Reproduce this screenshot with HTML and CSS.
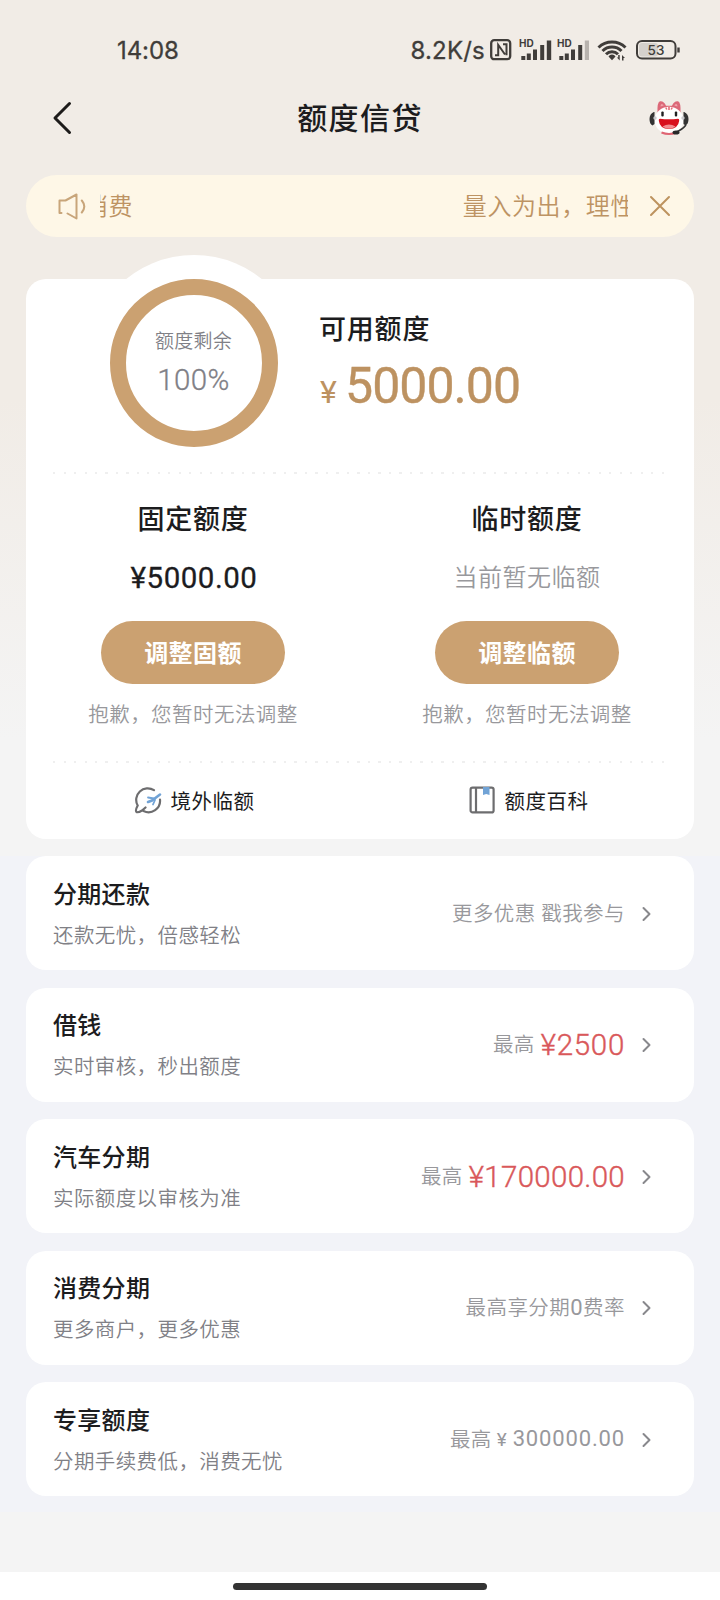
FILE: index.html
```html
<!DOCTYPE html>
<html lang="zh-CN">
<head>
<meta charset="utf-8">
<title>额度信贷</title>
<link rel="stylesheet" href="styles.css">
</head>
<body>
<div class="screen">
  <div class="status">
    <span class="time">14:08</span>
    <div class="status-right">
      <span class="speed">8.2K/s</span>
      <svg class="status-icons" width="192" height="30" viewBox="488 35 192 30" fill="none" stroke="#403d3a">
        <rect x="491.200" y="40.200" width="19" height="19" rx="3" stroke-width="2.300"/>
        <path d="M495 55.300h3.200V44.800L505 54.500M503 44.300h3.500V55.300" stroke-width="2"/>
        <g fill="#403d3a" stroke="none">
          <text class="hd" x="519" y="47">HD</text>
          <path d="M521.300 56h4v4h-4zM526.800 53.500h4V60h-4zM533 49.500h4V60h-4zM540.200 45h4v15h-4zM546.800 40.500h4.400V60h-4.400z"/>
          <text class="hd" x="557" y="47">HD</text>
          <path d="M559.300 56h4v4h-4zM564.800 53.500h4V60h-4zM571 49.500h4V60h-4zM578.200 45h4v15h-4z"/>
          <path d="M584.800 40.500h4.200V60h-4.200z" fill="#b8b3ae"/>
          <path d="M608.500 56.500a4 4 0 0 1 7 0l-3.500 3.800z"/>
          <path d="M619.700 55v5.500l-2.800-3h1.300V55zM622 60.500V55l3 3h-1.500v2.500z"/>
        </g>
        <path d="M598.500 47.500a19.500 19.500 0 0 1 27 0M602.500 51a13.500 13.500 0 0 1 19 0M606 54.300a8.500 8.500 0 0 1 12 0" stroke-width="3"/>
        <rect x="637" y="41" width="38.500" height="17.500" rx="5" stroke-width="2"/>
        <rect x="639" y="43" width="19" height="13.500" rx="3" fill="#d5d1cc" stroke="none"/>
        <path d="M678.500 47.500v5" stroke-width="2.400"/>
        <text class="battery" x="656" y="55" text-anchor="middle" fill="#403d3a" stroke="none">53</text>
      </svg>
    </div>
  </div>

  <header class="header">
    <svg class="back" width="24" height="36" viewBox="0 0 24 36" fill="none" stroke="#1d1b1a" stroke-width="3" stroke-linecap="round" stroke-linejoin="round"><path d="M18.500 3.500 4 18 18.500 32.500"/></svg>
    <h1 class="title">额度信贷</h1>
    <svg class="mascot" width="42" height="38" viewBox="0 0 42 38">
      <path d="M9.500 14Q9 3 12 2.200q4-.5 6 4.500h6q2-5 6-4.500 3 .8 2.500 11.800z" fill="#dc6878"/>
      <path d="M12.500 7.500q0-2.500 1.200-2.500 1.600.2 2 1.600zM29.500 7.500q0-2.500-1.200-2.500-1.600.2-2 1.600z" fill="#efa3ab"/>
      <ellipse cx="21" cy="21.300" rx="14.500" ry="13.500" fill="#fff"/>
      <path d="M17.800 8.500l1 2M21 7.800v3.200M24.200 8.500l-1 2" stroke="#e56b75" stroke-width="1.600"/>
      <path d="M13.500 33.500q7.500 3 15 0" stroke="#df6573" stroke-width="2" fill="none"/>
      <rect x="13.300" y="12.500" width="2.400" height="5" rx="1" fill="#202020"/>
      <rect x="26.800" y="12.500" width="2.400" height="5" rx="1" fill="#202020"/>
      <path d="M12 19.800q9 1 18 0 1.500 0 1.200 2-1 8.200-10.200 8.200t-10.200-8.200q-.3-2 1.200-2z" fill="#d8101e"/>
      <path d="M14.500 27.500q6.500-4 13 0-3 2.300-6.500 2.300t-6.500-2.300z" fill="#f28c91"/>
      <path d="M5.800 13Q1.500 15 1.500 20t3 6.500l2-1.500V13zM36.200 13q4.300 2 4.300 7t-3 6.500l-2-1.500V13z" fill="#343434"/>
      <path d="M38 26q-4 5-10 7" fill="none" stroke="#343434" stroke-width="1.700"/>
      <ellipse cx="28" cy="33.500" rx="3.500" ry="2" fill="#282828"/>
      <circle cx="7" cy="19" r="1.700" fill="#c9c9cc"/><circle cx="35" cy="19" r="1.700" fill="#c9c9cc"/>
    </svg>
  </header>

  <div class="notice">
    <svg class="horn" width="30" height="28" viewBox="0 0 30 28" fill="none" stroke="#c8a57a" stroke-width="2" stroke-linejoin="round" stroke-linecap="round"><path d="M4.500 21H2.500V8.500h6L19.500 2.500v24l-9-5M24.800 8.500q5 6 0 12"/></svg>
    <div class="marquee"><span class="tail">消费</span><span>量入为出，理性</span></div>
    <svg class="close" width="22" height="22" viewBox="0 0 22 22" stroke="#bd935f" stroke-width="2" stroke-linecap="round"><path d="M2 2 20 20M20 2 2 20"/></svg>
  </div>

  <main class="card quota">
    <div class="summary">
      <div class="gauge">
        <div class="ring"><span class="ring-label">额度剩余</span><span class="ring-value">100%</span></div>
      </div>
      <div class="available">
        <div class="heading">可用额度</div>
        <div class="amount"><span class="yen">¥</span><span class="sum">5000.00</span></div>
      </div>
    </div>
    <div class="dots"></div>
    <div class="columns">
      <section class="column">
        <h2 class="heading">固定额度</h2>
        <div class="value fixed">¥5000.00</div>
        <button class="pill">调整固额</button>
        <div class="hint">抱歉，您暂时无法调整</div>
      </section>
      <section class="column">
        <h2 class="heading">临时额度</h2>
        <div class="value none">当前暂无临额</div>
        <button class="pill">调整临额</button>
        <div class="hint">抱歉，您暂时无法调整</div>
      </section>
    </div>
    <div class="dots"></div>
    <div class="links">
      <a class="link"><svg width="28" height="28" viewBox="0 0 28 28" fill="none" stroke="#6d6d6f" stroke-width="2.200" stroke-linecap="round"><path d="M20 4.200A11.500 11.500 0 0 0 3.700 19.500M26 13.500A11.500 11.500 0 0 1 9.500 25M3.700 19.500Q1 24.500 2.500 26 4 27 8 24.500L11.500 21.500"/><path d="M14 16 18 14.500 26 8.500" stroke="#71a3d6" stroke-width="2.600"/><path d="M14 11.500 20 12.500 21 14 19 18.500" stroke="#71a3d6" stroke-width="1.800" stroke-linejoin="round"/></svg><span>境外临额</span></a>
      <a class="link"><svg width="28" height="28" viewBox="0 0 28 28" fill="none" stroke="#6d6d6f" stroke-width="2.200"><rect x="2.600" y="1.600" width="23" height="24.800" rx="2"/><path d="M8 1.500v25"/><path d="M15 1h6.500v8L18.200 8 15 9z" fill="#71a3d6" stroke="none"/></svg><span>额度百科</span></a>
    </div>
  </main>

  <div class="list">
    <div class="card row"><div class="info"><div class="name">分期还款</div><div class="desc">还款无忧，倍感轻松</div></div><div class="extra">更多优惠 戳我参与</div><svg class="chev" width="12" height="18" viewBox="0 0 12 18"><path d="M2.500 3 8.500 9l-6 6"/></svg></div>
    <div class="card row"><div class="info"><div class="name">借钱</div><div class="desc">实时审核，秒出额度</div></div><div class="extra">最高<span class="red short">¥2500</span></div><svg class="chev" width="12" height="18" viewBox="0 0 12 18"><path d="M2.500 3 8.500 9l-6 6"/></svg></div>
    <div class="card row"><div class="info"><div class="name">汽车分期</div><div class="desc">实际额度以审核为准</div></div><div class="extra">最高<span class="red">¥170000.00</span></div><svg class="chev" width="12" height="18" viewBox="0 0 12 18"><path d="M2.500 3 8.500 9l-6 6"/></svg></div>
    <div class="card row"><div class="info"><div class="name">消费分期</div><div class="desc">更多商户，更多优惠</div></div><div class="extra">最高享分期<span class="zero">0</span>费率</div><svg class="chev" width="12" height="18" viewBox="0 0 12 18"><path d="M2.500 3 8.500 9l-6 6"/></svg></div>
    <div class="card row"><div class="info"><div class="name">专享额度</div><div class="desc">分期手续费低，消费无忧</div></div><div class="extra">最高<span class="gray-num"><span class="small-yen">¥</span>300000.00</span></div><svg class="chev" width="12" height="18" viewBox="0 0 12 18"><path d="M2.500 3 8.500 9l-6 6"/></svg></div>
  </div>
  <div class="spacer"></div>
  <footer class="home"><div class="home-bar"></div></footer>
</div>
</body>
</html>
```
FILE: styles.css
```css
* { box-sizing: border-box; }
body { margin: 0; }
.screen {
  width: 720px; height: 1600px; overflow: hidden;
  display: flex; flex-direction: column;
  background: linear-gradient(#f1ece6 0, #f1ece6 400px, #f4f4f4 740px, #f4f4f4 100%);
  font-family: Roboto, "Noto Sans CJK SC", sans-serif;
  color: #1c1c1e;
}
.status { height: 78px; padding: 23px 40px 0 117px; display: flex; justify-content: space-between; align-items: flex-start; color: #403d3a; }
.time, .speed { font: 400 24px/56px Inter, sans-serif; white-space: nowrap; -webkit-text-stroke: 0.300px #403d3a; }
.time { letter-spacing: -0.1px; }
.speed { letter-spacing: 0.2px; }
.status-right { display: flex; gap: 3px; }
.status-icons { margin-top: 12px; }
.hd { font: 700 10px Inter, sans-serif; }
.battery { font: 500 13.500px Inter, sans-serif; }
.header { height: 97px; padding: 1px 30px 18px 51px; display: grid; grid-template-columns: 79px 1fr 100px; align-items: center; }
.title { margin: 1px 0 0; text-align: center; font-size: 30px; font-weight: 500; letter-spacing: 1.400px; line-height: 40px; }
.mascot { justify-self: end; }
.notice { height: 62px; flex: none; margin: 0 26px; padding: 0 23px 0 31px; border-radius: 31px; background: #fef7e7; color: #bd9363; display: flex; align-items: center; }
.horn { flex: none; }
.marquee { width: 528px; margin: 2px 0 0 13px; display: flex; justify-content: space-between; overflow: hidden; white-space: nowrap; font-size: 24px; letter-spacing: 0.600px; line-height: 36px; font-weight: 350; }
.marquee span { flex: none; }
.marquee span:last-child { margin-right: -7px; }
.tail { margin-left: -16px; }
.close { margin-left: auto; }
.card { background: #fff; border-radius: 20px; }
.quota { height: 560px; flex: none; margin: 42px 26px 0; }
.summary { height: 193px; display: flex; }
.gauge { width: 216px; height: 216px; flex: none; margin: -24px 0 0 59.500px; padding: 24px; border-radius: 50%; background: #fff; }
.ring { width: 168px; height: 168px; border: 16px solid #cba171; border-radius: 50%; display: flex; flex-direction: column; align-items: center; color: #808086; }
.ring-label { margin-top: 33px; font-size: 19px; line-height: 28px; letter-spacing: 0.300px; font-weight: 350; }
.ring-value { margin-top: 7px; font-size: 29.500px; line-height: 34px; font-weight: 300; letter-spacing: 0.400px; -webkit-text-stroke: 0.300px #808086; }
.available { margin-left: 17.500px; padding-top: 31px; }
.heading { margin: 0; font-size: 27px; line-height: 40px; font-weight: 500; letter-spacing: 0.800px; }
.amount { color: #bd9261; display: flex; align-items: baseline; margin-top: 6px; font-weight: 400; line-height: 60px; }
.yen { font-size: 32px; width: 26px; padding-left: 1px; }
.sum { font-size: 50px; letter-spacing: -0.950px; -webkit-text-stroke: 0.400px #bd9261; }
.dots { height: 2px; margin: 0 27px; background: repeating-linear-gradient(90deg, #efefef 0 2px, transparent 2px 10.500px); }
.columns { display: grid; grid-template-columns: 1fr 1fr; height: 287px; }
.column { width: 334px; display: flex; flex-direction: column; align-items: center; padding-top: 26px; }
.value { margin-top: 18px; height: 40px; line-height: 40px; }
.fixed { font-size: 29.500px; font-weight: 400; letter-spacing: 0.500px; padding-left: 2px; -webkit-text-stroke: 0.300px #1c1c1e; }
.none { font-size: 24px; color: #98989c; letter-spacing: 0.500px; font-weight: 350; }
.pill { width: 184px; height: 63px; margin-top: 23px; padding: 0 0 2px; border: 0; border-radius: 32px; background: #cba171; color: #fff; font: 700 24px/36px "Noto Sans CJK SC", sans-serif; letter-spacing: 0.400px; }
.hint { margin-top: 16px; font-size: 20.500px; line-height: 30px; letter-spacing: 0.450px; color: #98989c; font-weight: 350; }
.links { display: grid; grid-template-columns: 1fr 1fr; height: 74px; }
.link { display: flex; align-items: center; justify-content: center; gap: 9px; padding-left: 2px; font-size: 20.500px; letter-spacing: 0.500px; }
.list { flex: none; margin-top: 17px; height: 656px; padding: 0 26px; display: flex; flex-direction: column; gap: 17.500px; background: #f2f3f8; }
.row { height: 114px; flex: none; display: flex; align-items: center; padding: 1px 41px 0 27px; }
.info { flex: 1; }
.name { font-size: 24px; line-height: 36px; font-weight: 500; letter-spacing: 0.300px; }
.desc { margin-top: 8px; font-size: 20.500px; line-height: 30px; letter-spacing: 0.400px; color: #808086; font-weight: 350; }
.extra { font-size: 20.500px; letter-spacing: 0.450px; color: #98989c; display: flex; align-items: center; white-space: pre; line-height: 36px; font-weight: 350; }
.red { margin-left: 6px; color: #d9585a; font-size: 29.500px; font-weight: 300; letter-spacing: 0.300px; -webkit-text-stroke: 0.400px #d9585a; }
.short { letter-spacing: 0.700px; }
.zero { font-size: 22px; font-weight: 400; }
.gray-num { font-size: 22px; letter-spacing: 0.850px; font-weight: 400; }
.small-yen { font-size: 19px; margin: 0 5px; }
.chev { margin-left: 16px; fill: none; stroke: #88888c; stroke-width: 2; stroke-linecap: round; stroke-linejoin: round; }
.spacer { height: 60px; flex: none; }
.home { height: 28px; flex: none; background: #fff; display: flex; justify-content: center; padding-top: 11px; }
.home-bar { width: 254px; height: 6.500px; border-radius: 4px; background: #333; }
```
